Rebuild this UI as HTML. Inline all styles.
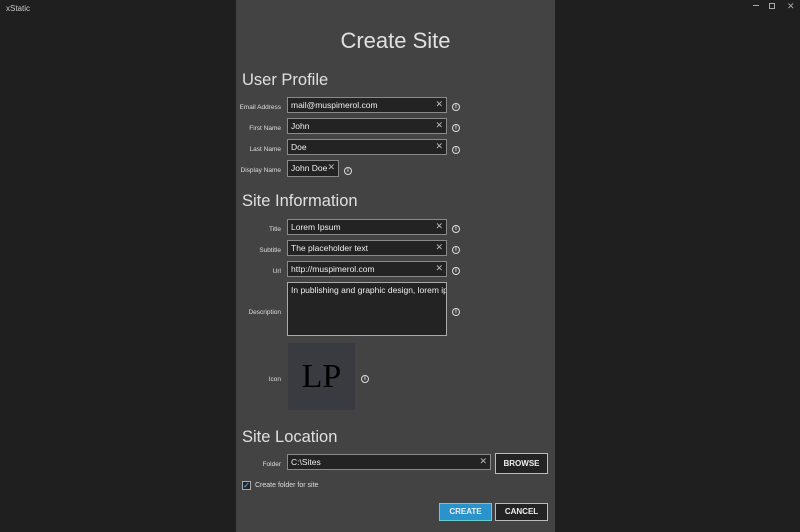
<!DOCTYPE html>
<html><head><meta charset="utf-8"><style>
*{margin:0;padding:0;box-sizing:border-box}
body{width:800px;height:532px;background:#1f1f1f;font-family:"Liberation Sans",sans-serif;color:#eee;position:relative;overflow:hidden}
.a{position:absolute}
.panel{left:236px;top:0;width:319px;height:532px;background:#434343}
.h1{left:236px;width:319px;text-align:center;top:28px;font-size:22px;color:#e0e0e0;font-weight:normal}
.h2{left:242px;font-size:16.5px;color:#e0e0e0}
.lbl{width:60px;left:221px;text-align:right;font-size:6.5px;color:#ddd}
.box{background:#232323;border:1px solid #8a8a8a;font-size:8.5px;color:#eee;padding:1px 3px;line-height:13px}
.x{position:absolute;right:3px;top:0px;font-size:9px;color:#bbb}
.i{width:8px;height:8px;border:1px solid #ddd;border-radius:50%;font-size:6px;line-height:6px;text-align:center;color:#ddd;font-weight:bold}
.btn{font-size:8px;font-weight:bold;text-align:center;line-height:16px;border:1px solid #bbb;background:#232323}
</style></head><body>
<div class="a" style="left:6px;top:4px;font-size:8px;color:#ccc">xStatic</div>
<div class="a" style="left:753px;top:5px;width:6px;height:1px;background:#aaa"></div>
<div class="a" style="left:769px;top:3px;width:6px;height:6px;border:1px solid #aaa"></div>
<div class="a" style="left:787px;top:1px;font-size:9px;color:#aaa">✕</div>
<div class="a panel"></div>
<div class="a h1">Create Site</div>
<div class="a h2" style="top:71px">User Profile</div>
<div class="a lbl" style="top:104px">Email Address</div>
<div class="a box" style="left:287px;top:97px;width:160px;height:16px">mail@muspimerol.com<span class="x">✕</span></div>
<div class="a i" style="left:452px;top:103px">i</div>
<div class="a lbl" style="top:125px">First Name</div>
<div class="a box" style="left:287px;top:118px;width:160px;height:16px">John<span class="x">✕</span></div>
<div class="a i" style="left:452px;top:124px">i</div>
<div class="a lbl" style="top:146px">Last Name</div>
<div class="a box" style="left:287px;top:139px;width:160px;height:16px">Doe<span class="x">✕</span></div>
<div class="a i" style="left:452px;top:146px">i</div>
<div class="a lbl" style="top:167px">Display Name</div>
<div class="a box" style="left:287px;top:160px;width:52px;height:17px">John Doe<span class="x">✕</span></div>
<div class="a i" style="left:344px;top:167px">i</div>
<div class="a h2" style="top:192px">Site Information</div>
<div class="a lbl" style="top:226px">Title</div>
<div class="a box" style="left:287px;top:219px;width:160px;height:16px">Lorem Ipsum<span class="x">✕</span></div>
<div class="a i" style="left:452px;top:225px">i</div>
<div class="a lbl" style="top:247px">Subtitle</div>
<div class="a box" style="left:287px;top:240px;width:160px;height:16px">The placeholder text<span class="x">✕</span></div>
<div class="a i" style="left:452px;top:246px">i</div>
<div class="a lbl" style="top:268px">Url</div>
<div class="a box" style="left:287px;top:261px;width:160px;height:16px">http://muspimerol.com<span class="x">✕</span></div>
<div class="a i" style="left:452px;top:267px">i</div>
<div class="a lbl" style="top:309px">Description</div>
<div class="a box" style="left:287px;top:282px;width:160px;height:54px;overflow:hidden;white-space:nowrap;border-color:#aaa">In publishing and graphic design, lorem ipsum</div>
<div class="a i" style="left:452px;top:308px">i</div>
<div class="a lbl" style="top:376px">Icon</div>
<div class="a" style="left:288px;top:343px;width:67px;height:67px;background:#3a3b40;color:#000;font-family:'Liberation Serif',serif;font-size:34px;line-height:67px;text-align:center">LP</div>
<div class="a i" style="left:361px;top:375px">i</div>
<div class="a h2" style="top:428px">Site Location</div>
<div class="a lbl" style="top:461px">Folder</div>
<div class="a box" style="left:287px;top:454px;width:204px;height:16px">C:\Sites<span class="x">✕</span></div>
<div class="a btn" style="left:495px;top:453px;width:53px;height:21px;line-height:19px">BROWSE</div>
<div class="a" style="left:242px;top:481px;width:9px;height:9px;border:1px solid #aaa;background:#232323;color:#3a9ad9;font-size:8px;line-height:7px;text-align:center;font-weight:bold">✓</div>
<div class="a" style="left:255px;top:482px;font-size:7px;color:#ddd">Create folder for site</div>
<div class="a btn" style="left:439px;top:503px;width:53px;height:18px;background:#2a93cc;border-color:#6cc">CREATE</div>
<div class="a btn" style="left:495px;top:503px;width:53px;height:18px">CANCEL</div>
</body></html>
